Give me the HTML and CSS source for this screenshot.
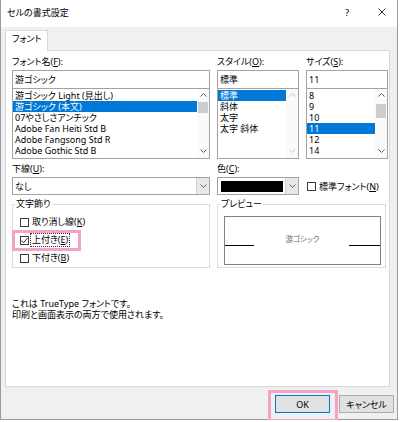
FILE: index.html
```html
<!DOCTYPE html>
<html lang="ja">
<head>
  <meta charset="UTF-8">
  <title>セルの書式設定</title>
  <link rel="stylesheet" href="styles.css">
</head>
<body>
  <div class="window">
    <div class="titlebar">
      <span class="title">セルの書式設定</span>
      <span class="help">?</span>
      <svg class="close" width="8" height="8" viewBox="0 0 8 8">
        <path d="M0.5 0.5 L7.5 7.5 M7.5 0.5 L0.5 7.5" stroke="#222" stroke-width="0.9" fill="none"/>
      </svg>
    </div>

    <div class="tabs">
      <div class="tab">フォント</div>
    </div>

    <div class="panel">
      <!-- font / style / size -->
      <div class="fields">
        <div class="col">
          <div class="label">フォント名(<u>F</u>):</div>
          <div class="textbox">游ゴシック</div>
          <div class="listbox">
            <ul class="items">
              <li>游ゴシック Light (見出し)</li>
              <li class="selected">游ゴシック (本文)</li>
              <li>07やさしさアンチック</li>
              <li>Adobe Fan Heiti Std B</li>
              <li>Adobe Fangsong Std R</li>
              <li>Adobe Gothic Std B</li>
            </ul>
            <div class="scrollbar">
              <svg class="arrow" width="7" height="4" viewBox="0 0 7 4"><polyline points="0.5,3.5 3.5,0.5 6.5,3.5" fill="none" stroke="#606060"/></svg>
              <div class="thumb thumb-font"></div>
              <svg class="arrow down" width="7" height="4" viewBox="0 0 7 4"><polyline points="0.5,0.5 3.5,3.5 6.5,0.5" fill="none" stroke="#606060"/></svg>
            </div>
          </div>
        </div>

        <div class="col">
          <div class="label">スタイル(<u>O</u>):</div>
          <div class="textbox">標準</div>
          <div class="listbox">
            <ul class="items">
              <li class="selected">標準</li>
              <li>斜体</li>
              <li>太字</li>
              <li>太字 斜体</li>
            </ul>
            <div class="scrollbar">
              <svg class="arrow" width="7" height="4" viewBox="0 0 7 4"><polyline points="0.5,3.5 3.5,0.5 6.5,3.5" fill="none" stroke="#c6c6c6"/></svg>
              <svg class="arrow down" width="7" height="4" viewBox="0 0 7 4"><polyline points="0.5,0.5 3.5,3.5 6.5,0.5" fill="none" stroke="#c6c6c6"/></svg>
            </div>
          </div>
        </div>

        <div class="col">
          <div class="label">サイズ(<u>S</u>):</div>
          <div class="textbox">11</div>
          <div class="listbox">
            <ul class="items">
              <li>8</li>
              <li>9</li>
              <li>10</li>
              <li class="selected">11</li>
              <li>12</li>
              <li>14</li>
            </ul>
            <div class="scrollbar">
              <svg class="arrow" width="7" height="4" viewBox="0 0 7 4"><polyline points="0.5,3.5 3.5,0.5 6.5,3.5" fill="none" stroke="#606060"/></svg>
              <div class="thumb thumb-size"></div>
              <svg class="arrow down" width="7" height="4" viewBox="0 0 7 4"><polyline points="0.5,0.5 3.5,3.5 6.5,0.5" fill="none" stroke="#606060"/></svg>
            </div>
          </div>
        </div>

        <!-- underline / colour -->
        <div class="col row2">
          <div class="label">下線(<u>U</u>):</div>
          <div class="combo">
            <span class="combo-text">なし</span>
            <span class="drop"><svg width="7" height="4" viewBox="0 0 7 4"><polyline points="0.5,0.5 3.5,3.5 6.5,0.5" fill="none" stroke="#606060"/></svg></span>
          </div>
        </div>

        <div class="col row2">
          <div class="label">色(<u>C</u>):</div>
          <div class="combo">
            <span class="swatch"></span>
            <span class="drop"><svg width="7" height="4" viewBox="0 0 7 4"><polyline points="0.5,0.5 3.5,3.5 6.5,0.5" fill="none" stroke="#606060"/></svg></span>
          </div>
        </div>

        <div class="col row2 normal-font">
          <div class="check">
            <span class="box"></span>
            <span>標準フォント(<u>N</u>)</span>
          </div>
        </div>

        <!-- effects / preview -->
        <fieldset class="group">
          <legend>文字飾り</legend>
          <div class="checks">
            <div class="check">
              <span class="box"></span>
              <span class="check-text">取り消し線(<u>K</u>)</span>
            </div>
            <div class="check">
              <span class="box">
                <svg width="7" height="7" viewBox="0 0 7 7"><polyline points="0.6,3.6 2.6,5.8 6.4,1" fill="none" stroke="#222" stroke-width="1"/></svg>
              </span>
              <span class="check-text focus">上付き(<u>E</u>)</span>
            </div>
            <div class="check">
              <span class="box"></span>
              <span class="check-text">下付き(<u>B</u>)</span>
            </div>
          </div>
        </fieldset>

        <fieldset class="group preview">
          <legend>プレビュー</legend>
          <div class="preview-box">
            <span class="sample">游ゴシック</span>
            <span class="base base-left"></span>
            <span class="base base-right"></span>
          </div>
        </fieldset>
      </div>

      <p class="note">これは TrueType フォントです。<br>印刷と画面表示の両方で使用されます。</p>
    </div>

    <div class="buttons">
      <button class="btn btn-ok">OK</button>
      <button class="btn">キャンセル</button>
    </div>

    <!-- highlight marks -->
    <div class="mark mark-check"></div>
    <div class="mark mark-ok"></div>
  </div>
</body>
</html>
```

FILE: styles.css
```css
* {
  box-sizing: border-box;
}
body {
  margin: 0;
  background: #fff;
  color: #000;
  font-family: "Noto Sans", "Noto Sans CJK JP", sans-serif;
  font-size: 9px;
  font-feature-settings: "palt";
}
u {
  text-decoration: underline;
  text-underline-offset: 1px;
}
.window {
  position: relative;
  width: 398px;
  height: 420px;
  background: #f0f0f0;
  border: 1px solid #9b9b9b;
  border-top: none;
}

/* title bar */
.titlebar {
  height: 27px;
  background: #fff;
  display: flex;
  align-items: center;
  padding: 0 11px 3px 6px;
}
.title {
  flex: 1;
}
.help {
  width: 12px;
  text-align: center;
  margin-right: 25px;
  font-size: 9.5px;
}
.close {
  display: block;
}

/* tabs */
.tabs {
  height: 23px;
  display: flex;
  align-items: flex-end;
  padding-left: 4px;
}
.tab {
  position: relative;
  z-index: 1;
  width: 43px;
  height: 21px;
  margin-bottom: -1px;
  padding: 2px 0 0 6px;
  line-height: 12px;
  background: #fff;
  border: 1px solid #d9d9d9;
  border-bottom: none;
}

/* panel */
.panel {
  width: 385px;
  height: 337px;
  margin-left: 4px;
  padding: 5px 1px 0 6px;
  background: #fff;
  border: 1px solid #d9d9d9;
}
.fields {
  display: grid;
  grid-template-columns: 198px 82px 82px;
  column-gap: 7px;
}
.label {
  height: 12px;
  line-height: 12px;
  margin-bottom: 2px;
}
.textbox {
  height: 19px;
  padding-left: 2px;
  line-height: 17px;
  border: 1px solid #a3a3a3;
}
.listbox {
  height: 70px;
  display: flex;
  border: 1px solid #a3a3a3;
  border-top: none;
}
.items {
  flex: 1;
  list-style: none;
  margin: 0;
  padding: 1px 0 0;
}
.items li {
  height: 11px;
  line-height: 11px;
  padding-left: 2px;
  white-space: nowrap;
}
.items li.selected {
  background: #0078d7;
  color: #fff;
}
.scrollbar {
  position: relative;
  width: 12px;
  background: #fafafa;
}
.arrow {
  position: absolute;
  left: 3px;
  top: 4px;
}
.arrow.down {
  top: auto;
  bottom: 5px;
}
.thumb {
  position: absolute;
  left: 1px;
  width: 10px;
  background: #cdcdcd;
}
.thumb-font {
  top: 13px;
  height: 11px;
}
.thumb-size {
  top: 15px;
  height: 14px;
}

/* underline / colour row */
.row2 {
  margin-top: 4px;
}
.combo {
  height: 18px;
  display: flex;
  align-items: center;
  border: 1px solid #a3a3a3;
}
.combo-text {
  flex: 1;
  padding-left: 2px;
}
.swatch {
  width: 62px;
  height: 11px;
  margin: 0 2px 0 3px;
  background: #000;
}
.drop {
  margin-left: auto;
  width: 13px;
  height: 16px;
  display: flex;
  align-items: center;
  justify-content: center;
  background: #e8e8e8;
  border-left: 1px solid #d2d2d2;
}
.drop svg {
  display: block;
}
.normal-font {
  display: flex;
  align-items: flex-end;
  padding-left: 1px;
}
.normal-font .check {
  height: 18px;
}

/* checkboxes */
.check {
  display: flex;
  align-items: center;
  height: 18px;
}
.box {
  width: 9px;
  height: 9px;
  margin-right: 3px;
  display: flex;
  align-items: center;
  justify-content: center;
  background: #fff;
  border: 1px solid #3c3c3c;
}
.box svg {
  display: block;
}
.check-text {
  line-height: 12px;
  padding: 0 1px;
  margin-left: -1px;
}
.focus {
  outline: 1px dotted #333;
  outline-offset: 0;
}

/* group boxes */
.group {
  margin: 3px 0 0;
  padding: 0;
  min-width: 0;
  border: 1px solid #dcdcdc;
}
.group legend {
  margin-left: 2px;
  padding: 0 1px;
  line-height: 12px;
}
.checks {
  padding: 3px 0 0 7px;
}
.preview {
  grid-column: span 2;
  margin-right: 2px;
}
.preview-box {
  position: relative;
  height: 49px;
  margin: 6px 4px 2px 6px;
  padding-top: 15px;
  text-align: center;
  background: #fff;
  border: 1px solid #828282;
}
.sample {
  display: inline-block;
  font-size: 7.5px;
  line-height: 10px;
  color: #666;
}
.base {
  position: absolute;
  top: 28px;
  height: 1px;
  background: #000;
}
.base-left {
  left: 0;
  width: 29px;
}
.base-right {
  right: 0;
  width: 31px;
}

.note {
  margin: 30px 0 0;
  line-height: 11px;
}

/* buttons */
.buttons {
  display: flex;
  justify-content: flex-end;
  gap: 9px;
  padding: 8px 3px 0 0;
}
.btn {
  width: 55px;
  height: 18px;
  padding: 0;
  font: inherit;
  color: #000;
  background: #e1e1e1;
  border: 1px solid #adadad;
}
.btn-ok {
  border-color: #0078d7;
}

/* pink marks */
.mark {
  position: absolute;
  border: 3px solid #f4a3c6;
}
.mark-check {
  left: 11px;
  top: 230px;
  width: 69px;
  height: 21px;
}
.mark-ok {
  left: 267px;
  top: 390px;
  width: 70px;
  height: 32px;
}
```
